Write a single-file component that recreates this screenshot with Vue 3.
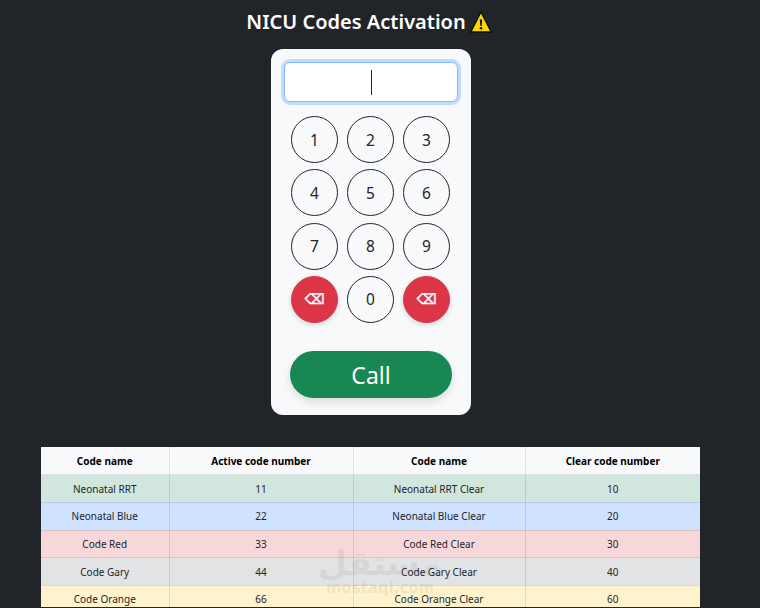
<template>
  <div class="page">
    <h1 class="title">
      NICU Codes Activation
      <svg class="warn" viewBox="0 0 24 24" width="24" height="24">
        <path d="M12 .6 23.4 23H.6Z" fill="#111" />
        <path d="M12 3.4 21 21.2H3Z" fill="#ffd800" />
        <path d="M10.8 9.5h2.4l-.5 6.5h-1.4Z" fill="#111" />
        <circle cx="12" cy="18.2" r="1.3" fill="#111" />
      </svg>
    </h1>

    <div class="dialer">
      <div class="display"><span class="caret"></span></div>
      <div class="keys">
        <button
          v-for="key in keys"
          :key="key.id"
          class="key"
          :class="{ del: key.del }"
        >{{ key.label }}</button>
      </div>
      <button class="call">Call</button>
    </div>

    <table class="codes">
      <thead>
        <tr>
          <th class="c1">Code name</th>
          <th class="c2">Active code number</th>
          <th class="c3">Code name</th>
          <th class="c4">Clear code number</th>
        </tr>
      </thead>
      <tbody>
        <tr v-for="row in rows" :key="row.name" :class="row.tone">
          <td>{{ row.name }}</td>
          <td>{{ row.active }}</td>
          <td>{{ row.name }} Clear</td>
          <td>{{ row.clear }}</td>
        </tr>
      </tbody>
    </table>

    <div class="watermark">
      <span class="wm-ar">مستقل</span>
      <span class="wm-en">mostaql.com</span>
    </div>
  </div>
</template>

<script setup>
const keys = [
  { id: 1, label: '1' },
  { id: 2, label: '2' },
  { id: 3, label: '3' },
  { id: 4, label: '4' },
  { id: 5, label: '5' },
  { id: 6, label: '6' },
  { id: 7, label: '7' },
  { id: 8, label: '8' },
  { id: 9, label: '9' },
  { id: 'del1', label: '⌫', del: true },
  { id: 0, label: '0' },
  { id: 'del2', label: '⌫', del: true }
]

const rows = [
  { name: 'Neonatal RRT', active: 11, clear: 10, tone: 'green' },
  { name: 'Neonatal Blue', active: 22, clear: 20, tone: 'blue' },
  { name: 'Code Red', active: 33, clear: 30, tone: 'red' },
  { name: 'Code Gary', active: 44, clear: 40, tone: 'gray' },
  { name: 'Code Orange', active: 66, clear: 60, tone: 'yellow' }
]
</script>

<style>
html,
body {
  margin: 0;
  height: 608px;
  overflow: hidden;
  background: #212529;
}
</style>

<style scoped>
.page {
  position: relative;
  box-sizing: border-box;
  width: 742px;
  height: 607px;
  overflow: hidden;
  padding-top: 8px;
  background: #212529;
  font-family: "Noto Sans", "Open Sans", sans-serif;
}

.title {
  display: flex;
  justify-content: center;
  align-items: center;
  gap: 3px;
  height: 27px;
  margin: 0 0 14px;
  padding-right: 3px;
  color: #fff;
  font-size: 20px;
  font-weight: 600;
}

.dialer {
  box-sizing: border-box;
  width: 200px;
  height: 366px;
  margin: 0 auto 32px;
  padding: 13px;
  background: #f8f9fa;
  border-radius: 12px;
  display: flex;
  flex-direction: column;
  align-items: center;
}

.display {
  box-sizing: border-box;
  width: 174px;
  height: 40px;
  flex: none;
  display: flex;
  align-items: center;
  justify-content: center;
  background: #fff;
  border: 1px solid #86b7fe;
  border-radius: 6px;
  box-shadow: 0 0 0 3px #c2dbfe;
}

.caret {
  width: 1px;
  height: 25px;
  background: #212529;
}

.keys {
  display: grid;
  grid-template-columns: repeat(3, 47px);
  grid-auto-rows: 47px;
  column-gap: 9px;
  row-gap: 6.3px;
  margin: 14px 1px 0 0;
}

.key {
  padding: 0;
  border: 1px solid #212529;
  border-radius: 50%;
  background: transparent;
  color: #212529;
  font-family: inherit;
  font-size: 15.5px;
}

.key.del {
  border-color: #dc3545;
  background: #dc3545;
  color: #fff;
  font-family: "DejaVu Sans", sans-serif;
  font-size: 14px;
  -webkit-text-stroke: 0.5px #fff;
  box-shadow: 0 2px 5px rgba(0, 0, 0, 0.15);
}

.call {
  width: 162px;
  height: 47px;
  flex: none;
  margin-top: 28px;
  padding: 2px 0 0;
  border: none;
  border-radius: 24px;
  background: #198754;
  color: #fff;
  font-family: inherit;
  font-size: 23px;
  box-shadow: 0 4px 8px rgba(0, 0, 0, 0.12);
}

.codes {
  width: 659px;
  margin-left: 41px;
  border-collapse: collapse;
  table-layout: fixed;
  font-size: 10px;
  color: #212529;
}

.codes th,
.codes td {
  box-sizing: border-box;
  height: 27.7px;
  padding: 0;
  text-align: center;
  border: 1px solid rgba(0, 0, 0, 0.1);
}

.codes th {
  background: #f8f9fa;
  color: #000;
  font-weight: 700;
  border-color: #dee2e6;
  border-top: none;
}

.codes th:first-child,
.codes td:first-child {
  border-left: none;
}

.codes th:last-child,
.codes td:last-child {
  border-right: none;
}

.c1 { width: 128px; }
.c2 { width: 184px; }
.c3 { width: 172px; }
.c4 { width: 175px; }

.green td { background: #d1e7dd; }
.blue td { background: #cfe2ff; }
.red td { background: #f8d7da; }
.gray td { background: #e2e3e5; }
.yellow td { background: #fff3cd; }

.watermark {
  position: absolute;
  left: 330px;
  top: 546px;
  width: 100px;
  display: flex;
  flex-direction: column;
  align-items: center;
  color: rgba(90, 90, 90, 0.1);
  font-family: "DejaVu Sans", sans-serif;
  pointer-events: none;
}

.wm-ar {
  font-size: 34px;
  font-weight: 700;
  line-height: 35px;
}

.wm-en {
  font-size: 15px;
  font-weight: 700;
  line-height: 14px;
}
</style>
